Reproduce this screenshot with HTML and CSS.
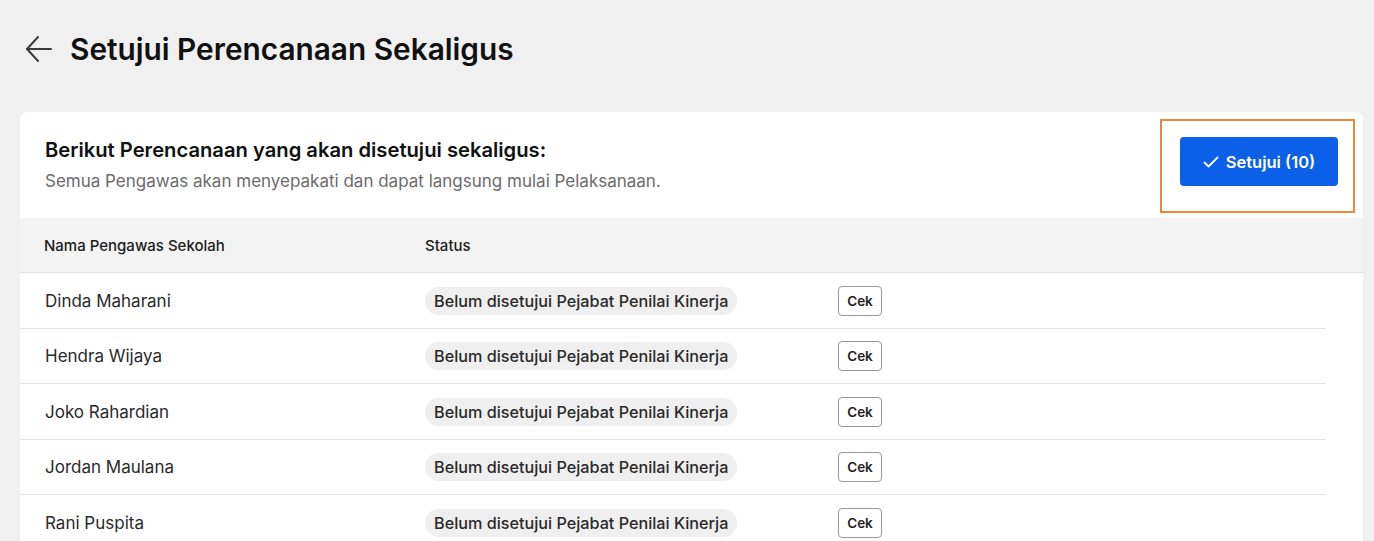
FILE: index.html
```html
<!DOCTYPE html>
<html lang="id">
<head>
    <meta charset="UTF-8">
    <title>Setujui Perencanaan Sekaligus</title>
    <link rel="stylesheet" href="styles.css">
</head>
<body>
    <div class="page-head">
        <svg class="back" width="28" height="28" viewBox="0 0 28 28" fill="none" stroke="#3c3c3c" stroke-width="2" stroke-linecap="round" stroke-linejoin="round">
            <path d="M26 14H2"/>
            <path d="M13 2L2 14l11 12"/>
        </svg>
        <h1>Setujui Perencanaan Sekaligus</h1>
    </div>

    <div class="card">
        <div class="card-top">
            <div>
                <h2>Berikut Perencanaan yang akan disetujui sekaligus:</h2>
                <p>Semua Pengawas akan menyepakati dan dapat langsung mulai Pelaksanaan.</p>
            </div>
            <div class="highlight">
                <button class="btn-approve">
                    <svg width="16" height="12" viewBox="0 0 16 12" fill="none" stroke="#fff" stroke-width="1.8" stroke-linecap="round" stroke-linejoin="round">
                        <path d="M1.5 6.5l4 4L14.5 1.5"/>
                    </svg>
                    Setujui (10)
                </button>
            </div>
        </div>

        <div class="thead">
            <div class="col-name">Nama Pengawas Sekolah</div>
            <div class="col-status">Status</div>
        </div>

        <div class="rows">
            <div class="row">
                <div class="col-name">Dinda Maharani</div>
                <div class="col-status"><span class="badge">Belum disetujui Pejabat Penilai Kinerja</span></div>
                <button class="btn-cek">Cek</button>
            </div>
            <div class="row">
                <div class="col-name">Hendra Wijaya</div>
                <div class="col-status"><span class="badge">Belum disetujui Pejabat Penilai Kinerja</span></div>
                <button class="btn-cek">Cek</button>
            </div>
            <div class="row">
                <div class="col-name">Joko Rahardian</div>
                <div class="col-status"><span class="badge">Belum disetujui Pejabat Penilai Kinerja</span></div>
                <button class="btn-cek">Cek</button>
            </div>
            <div class="row">
                <div class="col-name">Jordan Maulana</div>
                <div class="col-status"><span class="badge">Belum disetujui Pejabat Penilai Kinerja</span></div>
                <button class="btn-cek">Cek</button>
            </div>
            <div class="row">
                <div class="col-name">Rani Puspita</div>
                <div class="col-status"><span class="badge">Belum disetujui Pejabat Penilai Kinerja</span></div>
                <button class="btn-cek">Cek</button>
            </div>
        </div>
    </div>
</body>
</html>
```

FILE: styles.css
```css
        body {
            margin: 0;
            font-family: Inter, "Noto Sans", sans-serif;
            background-color: #f0f0f0;
            color: #1a1a1a;
            overflow: hidden;
        }
        .page-head {
            display: flex;
            align-items: center;
            gap: 17px;
            height: 98px;
            padding: 0 0 0 25px;
        }
        .page-head h1 {
            margin: 0;
            font-size: 29.8px;
            font-weight: 600;
            color: #111;
        }
        .back {
            display: block;
        }
        .card {
            margin: 14px 0 0 20px;
            width: 1343px;
            background: #fff;
            border-radius: 7px 7px 0 0;
            overflow: hidden;
        }
        .card-top {
            display: flex;
            justify-content: space-between;
            align-items: flex-start;
            height: 106px;
            padding-left: 25px;
            padding-right: 8px;
        }
        .card-top h2 {
            margin: 26px 0 0;
            font-size: 20.2px;
            line-height: 24px;
            font-weight: 600;
            color: #111;
        }
        .card-top p {
            margin: 9px 0 0;
            font-size: 17px;
            line-height: 20px;
            color: #6b6b6b;
        }
        .highlight {
            margin-top: 7px;
            border: 2px solid #e8893c;
            padding: 16px 15px 25px 18px;
        }
        .btn-approve {
            display: flex;
            align-items: center;
            justify-content: center;
            gap: 7px;
            width: 158px;
            height: 49px;
            border: none;
            border-radius: 4px;
            background: #0b5fe8;
            color: #fff;
            font-family: inherit;
            font-size: 16.5px;
            font-weight: 600;
            cursor: pointer;
        }
        .thead {
            display: flex;
            align-items: center;
            height: 54px;
            background: #f3f3f3;
            border-bottom: 1px solid #e2e2e2;
            font-size: 15px;
            font-weight: 500;
            color: #1c1c1c;
        }
        .col-name {
            width: 381px;
            padding-left: 24px;
        }
        .col-status {
            width: 413px;
        }
        .rows {
            margin-right: 37px;
        }
        .row {
            display: flex;
            align-items: center;
            height: 54.5px;
            padding-top: 1px;
            box-sizing: border-box;
            border-bottom: 1px solid #e6e6e6;
            font-size: 17px;
            color: #2a2a2a;
        }
        .row {
            height: 55.5px;
        }
        .row .col-name {
            padding-left: 25px;
            width: 380px;
        }
        .badge {
            display: inline-block;
            padding: 4px 9px;
            border-radius: 14px;
            background: #efefef;
            font-size: 16.2px;
            font-weight: 500;
            color: #2a2a2a;
        }
        .btn-cek {
            width: 44px;
            height: 30px;
            padding: 0;
            border: 1px solid #9a9a9a;
            border-radius: 4px;
            background: #fff;
            font-family: inherit;
            font-size: 13.5px;
            font-weight: 600;
            color: #222;
            cursor: pointer;
        }
```
